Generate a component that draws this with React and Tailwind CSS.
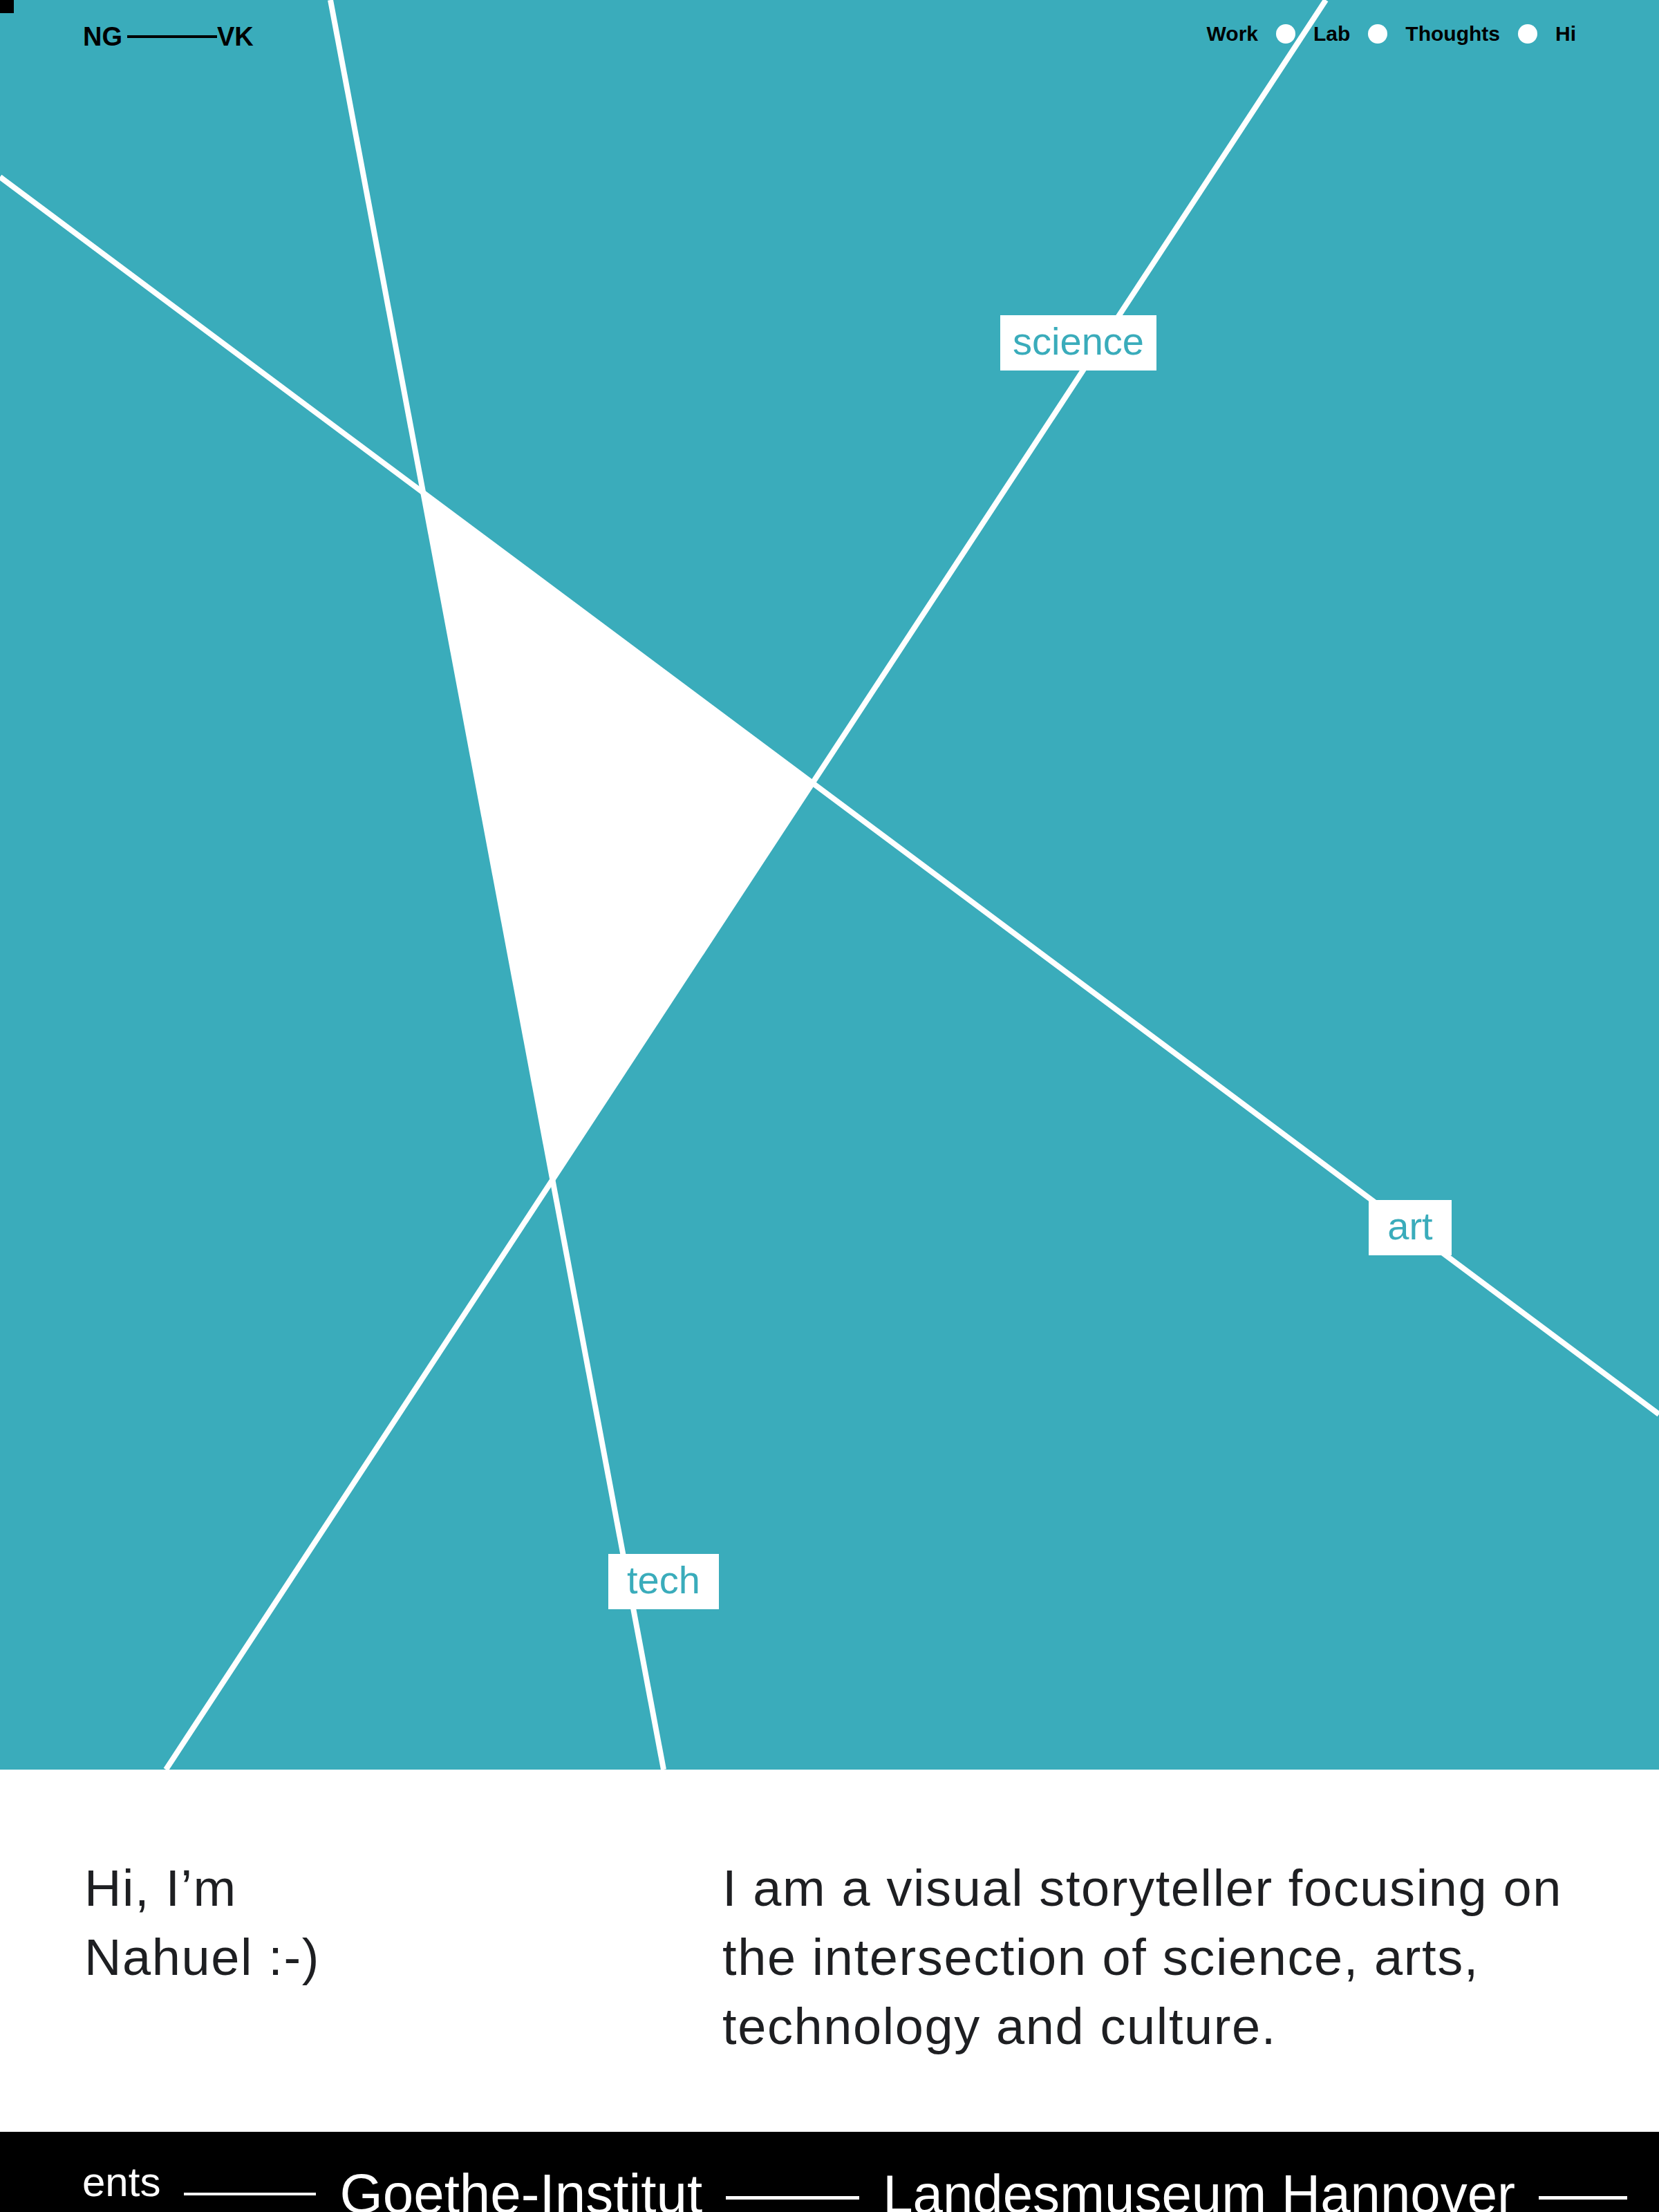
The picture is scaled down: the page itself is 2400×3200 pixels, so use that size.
import React from 'react';

const navItems = ['Work', 'Lab', 'Thoughts', 'Hi'];

function Hero() {
  return (
    <div className="relative h-[2560px] bg-[#3aacbb] overflow-hidden">
      {/* lines + triangle */}
      <svg
        className="absolute inset-0"
        width="2400"
        height="2560"
        viewBox="0 0 2400 2560"
      >
        <polygon points="612,712 1175,1133 799,1707" fill="#ffffff" />
        <line x1="478" y1="0" x2="960" y2="2560" stroke="#ffffff" strokeWidth="8" />
        <line x1="0" y1="256" x2="2400" y2="2046" stroke="#ffffff" strokeWidth="8" />
        <line x1="1918" y1="0" x2="240" y2="2560" stroke="#ffffff" strokeWidth="8" />
      </svg>

      <div className="absolute left-0 top-0 w-[20px] h-[19px] bg-black" />

      {/* Header */}
      <div className="relative z-10 flex justify-between items-start px-[120px] pt-[34px]">
        <div className="flex items-center text-[38px] leading-none font-bold text-black">
          <span>NG</span>
          <span className="ml-[7px] w-[130px] h-[4px] bg-black" />
          <span>VK</span>
        </div>
        <nav className="flex items-center gap-[26px] text-[30px] leading-none font-bold text-black">
          {navItems.map((item, i) => (
            <React.Fragment key={item}>
              {i > 0 && <span className="w-[28px] h-[28px] rounded-full bg-white" />}
              <a href="#">{item}</a>
            </React.Fragment>
          ))}
        </nav>
      </div>

      {/* Labels */}
      <div className="absolute left-[1447px] top-[456px] w-[226px] h-[80px] bg-white flex items-center justify-center pb-[4px] text-[56px] leading-none text-[#3aacbb]">
        science
      </div>
      <div className="absolute left-[1980px] top-[1736px] w-[120px] h-[80px] bg-white flex items-center justify-center pb-[4px] text-[56px] leading-none text-[#3aacbb]">
        art
      </div>
      <div className="absolute left-[880px] top-[2248px] w-[160px] h-[80px] bg-white flex items-center justify-center pb-[4px] text-[56px] leading-none text-[#3aacbb]">
        tech
      </div>
    </div>
  );
}

function Intro() {
  return (
    <div className="bg-white flex pl-[122px] pr-[120px] pt-[122px] pb-[102px] text-[74px] leading-[100px] tracking-[1.6px] text-[#1e1f22]">
      <h1 className="w-[923px] shrink-0">
        Hi, I’m
        <br />
        Nahuel :-)
      </h1>
      <p className="flex-1">
        I am a visual storyteller focusing on the intersection of science, arts,
        technology and culture.
      </p>
    </div>
  );
}

function Clients() {
  return (
    <div className="h-[116px] bg-black overflow-hidden flex items-start gap-[34px] pl-[119px] whitespace-nowrap text-white">
      <span className="mt-[43px] text-[60px] leading-none">ents</span>
      <span className="mt-[88px] w-[191px] h-[4px] bg-white shrink-0" />
      <span className="mt-[50px] text-[80px] leading-none">Goethe-Institut</span>
      <span className="mt-[93px] w-[193px] h-[5px] bg-white shrink-0" />
      <span className="mt-[51px] text-[78px] leading-none">Landesmuseum Hannover</span>
      <span className="mt-[93px] w-[128px] h-[5px] bg-white shrink-0" />
    </div>
  );
}

export default function App() {
  return (
    <div className="w-[2400px] font-['Liberation_Sans',Arial,sans-serif]">
      <Hero />
      <Intro />
      <Clients />
    </div>
  );
}
